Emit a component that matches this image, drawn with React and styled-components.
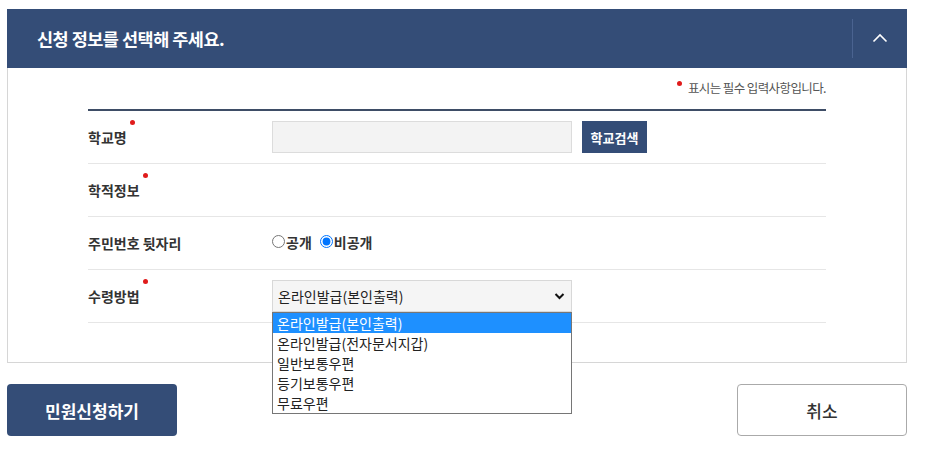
import React from "react";
import styled, { createGlobalStyle } from "styled-components";

const Global = createGlobalStyle`
  html, body { margin: 0; padding: 0; background: #fff; }
  body { font-family: "Noto Sans CJK KR", "Noto Sans", sans-serif; color: #333; }
  * { box-sizing: border-box; }
`;

const Page = styled.div`
  width: 925px;
  padding: 9px 18px 0 7px;
`;

const Header = styled.div`
  height: 59px;
  background: #344d77;
  display: flex;
  align-items: center;
`;

const Title = styled.h2`
  flex: 1;
  margin: 0;
  padding-left: 30px;
  font-size: 17.5px;
  font-weight: 700;
  color: #fff;
  letter-spacing: -0.5px;
`;

const ToggleBtn = styled.button`
  width: 55px;
  height: 39px;
  border: 0;
  border-left: 1px solid #4a6390;
  background: transparent;
  display: flex;
  align-items: center;
  justify-content: center;
  padding: 0 0 2px 0;
  cursor: pointer;
`;

const Body = styled.div`
  border: 1px solid #d6d6d6;
  border-top: 0;
  padding: 10px 80px 39px 80px;
`;

const Note = styled.p`
  margin: 0;
  display: flex;
  justify-content: flex-end;
  align-items: flex-start;
  font-size: 12.5px;
  color: #555;
  letter-spacing: -0.6px;
  height: 31px;
  line-height: 20px;
`;

const Dot = styled.span`
  display: inline-block;
  width: 5px;
  height: 5px;
  border-radius: 50%;
  background: #e01b1b;
  margin: ${p => p.$m || "0"};
  flex: none;
`;

const Table = styled.div`
  border-top: 2px solid #3e4d66;
`;

const Row = styled.div`
  display: flex;
  align-items: center;
  height: 53px;
  border-bottom: 1px solid #e6e6e6;
`;

const Label = styled.div`
  width: 184px;
  display: flex;
  align-items: flex-start;
  font-size: 14px;
  font-weight: 700;
  color: #333;
`;

const Field = styled.div`
  flex: 1;
  display: flex;
  align-items: center;
  gap: 10px;
  position: relative;
`;

const TextInput = styled.input`
  width: 300px;
  height: 32px;
  background: #f3f3f3;
  border: 1px solid #dcdcdc;
  padding: 0 8px;
  font: inherit;
`;

const SmallBtn = styled.button`
  height: 32px;
  width: 65px;
  background: #344d77;
  color: #fff;
  border: 0;
  font-family: inherit;
  font-size: 13px;
  font-weight: 700;
  padding: 0;
`;

const RadioLabel = styled.label`
  display: inline-flex;
  align-items: center;
  font-size: 14px;
  font-weight: 700;
  color: #333;
  margin-right: 8px;
  input { margin: 0 1px 0 0; width: 13px; height: 13px; }
`;

const Radios = styled.div`
  display: flex;
  align-items: center;
  margin-top: -3px;
`;

const SelectBox = styled.div`
  width: 300px;
  height: 32px;
  border: 1px solid #d8d8d8;
  background: #f5f5f5;
  display: flex;
  align-items: center;
  justify-content: space-between;
  padding: 0 6px 0 5px;
  font-size: 14px;
  color: #222;
`;

const ListBox = styled.ul`
  position: absolute;
  left: 0;
  top: 32px;
  width: 300px;
  margin: 0;
  padding: 0;
  list-style: none;
  border: 1px solid #767676;
  background: #fff;
  z-index: 5;
`;

const Option = styled.li`
  height: 20px;
  line-height: 20px;
  padding: 0 4px;
  font-size: 14px;
  color: ${p => (p.$active ? "#fff" : "#222")};
  background: ${p => (p.$active ? "#1e90ff" : "transparent")};
`;

const Actions = styled.div`
  display: flex;
  justify-content: space-between;
  margin-top: 21px;
`;

const PrimaryBtn = styled.button`
  width: 170px;
  height: 52px;
  border: 0;
  border-radius: 4px;
  background: #344d77;
  color: #fff;
  font-family: inherit;
  font-size: 17px;
  font-weight: 700;
`;

const GhostBtn = styled.button`
  width: 170px;
  height: 52px;
  border: 1px solid #aaa;
  border-radius: 4px;
  background: #fff;
  color: #333;
  font-family: inherit;
  font-size: 17px;
  font-weight: 500;
`;

const options = [
  "온라인발급(본인출력)",
  "온라인발급(전자문서지갑)",
  "일반보통우편",
  "등기보통우편",
  "무료우편",
];

export default function App() {
  return (
    <Page>
      <Global />
      <Header>
        <Title>신청 정보를 선택해 주세요.</Title>
        <ToggleBtn aria-label="접기">
          <svg width="16" height="10" viewBox="0 0 16 10">
            <path d="M1.5 8.5 L8 2 L14.5 8.5" fill="none" stroke="#fff" strokeWidth="1.6" />
          </svg>
        </ToggleBtn>
      </Header>
      <Body>
        <Note>
          <Dot $m="3px 6px 0 0" />
          표시는 필수 입력사항입니다.
        </Note>
        <Table>
          <Row>
            <Label>
              학교명
              <Dot $m="-7px 0 0 3px" />
            </Label>
            <Field>
              <TextInput type="text" />
              <SmallBtn>학교검색</SmallBtn>
            </Field>
          </Row>
          <Row>
            <Label>
              학적정보
              <Dot $m="-7px 0 0 3px" />
            </Label>
            <Field />
          </Row>
          <Row>
            <Label>주민번호 뒷자리</Label>
            <Field>
              <Radios>
                <RadioLabel>
                  <input type="radio" name="rrn" />
                  공개
                </RadioLabel>
                <RadioLabel>
                  <input type="radio" name="rrn" defaultChecked />
                  비공개
                </RadioLabel>
              </Radios>
            </Field>
          </Row>
          <Row>
            <Label>
              수령방법
              <Dot $m="-7px 0 0 3px" />
            </Label>
            <Field>
              <SelectBox>
                <span>{options[0]}</span>
                <svg width="11" height="8" viewBox="0 0 11 8">
                  <path d="M1.5 2 L5.5 6 L9.5 2" fill="none" stroke="#111" strokeWidth="2" />
                </svg>
              </SelectBox>
              <ListBox>
                {options.map((o, i) => (
                  <Option key={o} $active={i === 0}>{o}</Option>
                ))}
              </ListBox>
            </Field>
          </Row>
        </Table>
      </Body>
      <Actions>
        <PrimaryBtn>민원신청하기</PrimaryBtn>
        <GhostBtn>취소</GhostBtn>
      </Actions>
    </Page>
  );
}
